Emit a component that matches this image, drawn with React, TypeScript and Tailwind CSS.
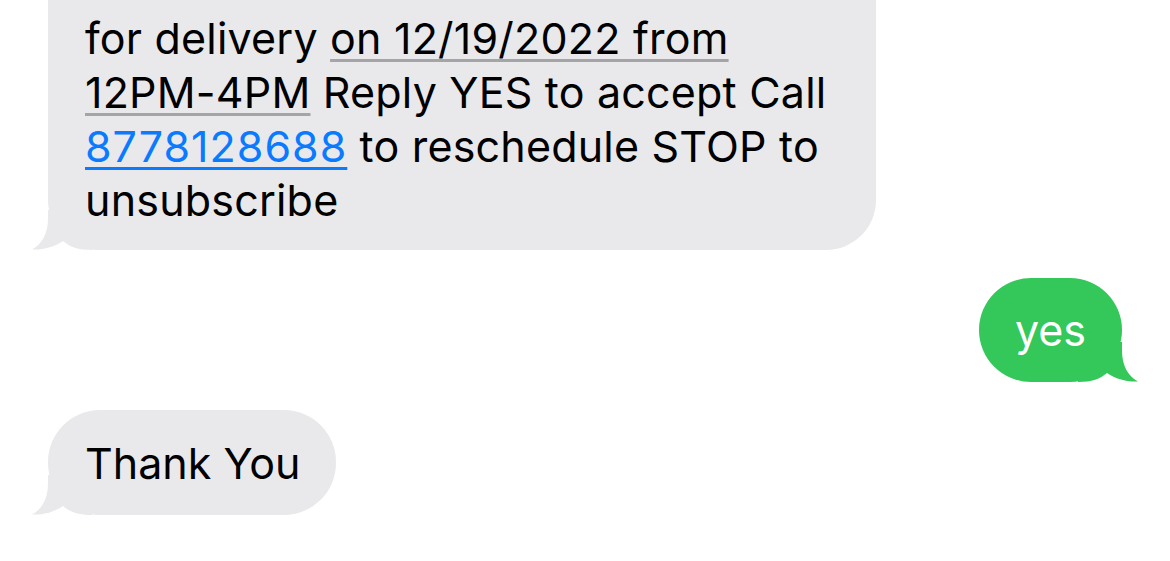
import React, { FC } from "react";

type Side = "left" | "right";

/**
 * little curl at the bottom corner of a bubble, same fill as the bubble
 */
const Tail: FC<{ side: Side; color: string }> = ({ side, color }) => (
	<svg
		width="60"
		height="40"
		viewBox="0 0 60 40"
		className={side === "left" ? "absolute bottom-0 left-[-16px]" : "absolute bottom-0 right-[-16px] -scale-x-100"}
		aria-hidden
	>
		<path d="M16 0 L16 8 C16 24 10 34 0 39.5 C12 40 22 37 31 31 C38 37 46 40 60 40 L60 0 Z" fill={color} />
	</svg>
);

const Underlined: FC<{ children: React.ReactNode }> = ({ children }) => (
	<span className="underline decoration-[#a5a5a7] decoration-[3px] underline-offset-[5px]">{children}</span>
);

export default function App() {
	return (
		<div className="w-[1170px] h-[561px] overflow-hidden bg-white font-['Inter','Liberation_Sans',sans-serif] text-[43px] leading-[54px] text-black">
			<div className="flex flex-col">
				{/* incoming message, top cut off by the screenshot */}
				<div className="relative ml-[48px] w-[828px] rounded-b-[50px] bg-[#e9e9eb] pt-[11px] pb-[23px] pl-[37px] tracking-[0.2px]">
					<span className="relative z-10">
						for delivery <Underlined>on 12/19/2022 from</Underlined>
						<br />
						<Underlined>12PM-4PM</Underlined> Reply YES to accept Call
						<br />
						<span className="tracking-[1px] text-[#0a7aff] underline decoration-[#0a7aff] decoration-[3px] underline-offset-[5px]">
							8778128688
						</span>{" "}
						to reschedule STOP to
						<br />
						unsubscribe
					</span>
					<Tail side="left" color="#e9e9eb" />
				</div>

				{/* outgoing */}
				<div className="relative mt-[28px] mr-[48px] self-end rounded-[52px] bg-[#34c759] px-[36px] py-[25px] text-white">
					<span className="relative z-10">yes</span>
					<Tail side="right" color="#34c759" />
				</div>

				{/* incoming */}
				<div className="relative mt-[28px] ml-[48px] self-start flex h-[105px] items-center rounded-[52px] bg-[#e9e9eb] pl-[37px] pr-[35px]">
					<span className="relative z-10">Thank You</span>
					<Tail side="left" color="#e9e9eb" />
				</div>
			</div>
		</div>
	);
}
